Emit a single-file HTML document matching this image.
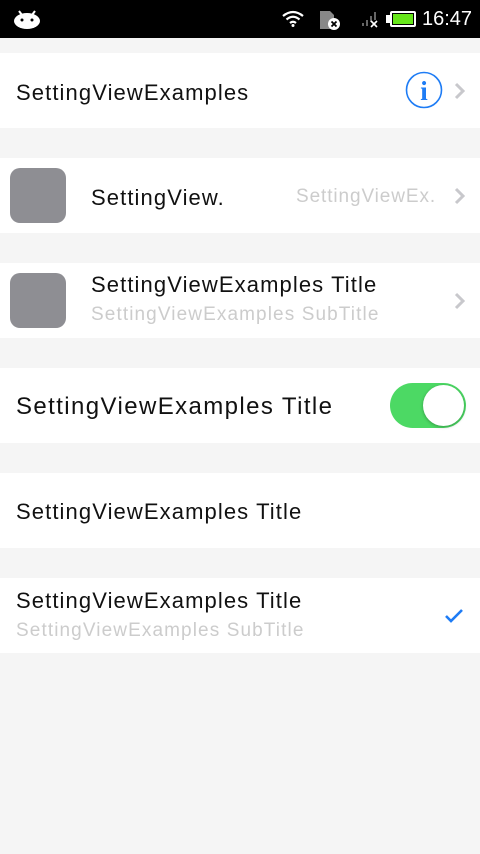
<!DOCTYPE html>
<html><head><meta charset="utf-8"><style>
*{margin:0;padding:0;box-sizing:border-box}
body{width:480px;height:854px;background:#f5f5f5;font-family:"Liberation Sans","DejaVu Sans",sans-serif;position:relative;overflow:hidden}
.sb{position:absolute;left:0;top:0;width:480px;height:38px;background:#000;color:#fff}
.row{position:absolute;left:0;width:480px;height:75px;background:#fff}
.t{position:absolute;font-size:22px;color:#111;white-space:nowrap;letter-spacing:1.1px}
.s{position:absolute;font-size:19px;color:#ccc;white-space:nowrap;letter-spacing:1.1px}
.img{position:absolute;left:10px;top:10px;width:56px;height:55px;border-radius:10px;background:#8e8e93}
.chev{position:absolute;right:14px;top:29px}
</style></head><body>
<div class="sb">
<svg style="position:absolute;left:13px;top:9px" width="28" height="20"><ellipse cx="14" cy="12" rx="13" ry="8" fill="#fff"/><line x1="6" y1="2" x2="9" y2="6" stroke="#fff" stroke-width="2"/><line x1="22" y1="2" x2="19" y2="6" stroke="#fff" stroke-width="2"/><circle cx="9" cy="11" r="1.5" fill="#000"/><circle cx="19" cy="11" r="1.5" fill="#000"/></svg>
<svg style="position:absolute;left:282px;top:10px" width="22" height="17"><path d="M1 6 Q11 -2 21 6" stroke="#fff" stroke-width="2.2" fill="none"/><path d="M4.5 9.5 Q11 4 17.5 9.5" stroke="#fff" stroke-width="2.2" fill="none"/><path d="M8 13 Q11 10.5 14 13" stroke="#fff" stroke-width="2.2" fill="none"/><circle cx="11" cy="15.5" r="1.5" fill="#fff"/></svg>
<svg style="position:absolute;left:318px;top:9px" width="24" height="22"><path d="M2 2h10l4 4v14H2z" fill="#888"/><circle cx="16" cy="15" r="6" fill="#fff"/><path d="M13.5 12.5l5 5M18.5 12.5l-5 5" stroke="#000" stroke-width="1.8"/></svg>
<svg style="position:absolute;left:360px;top:10px" width="20" height="18"><rect x="2" y="13" width="2" height="3" fill="#666"/><rect x="6" y="10" width="2" height="6" fill="#666"/><rect x="10" y="6" width="2" height="6" fill="#666"/><rect x="14" y="2" width="2" height="8" fill="#666"/><path d="M11 11l6 6M17 11l-6 6" stroke="#fff" stroke-width="1.6"/></svg>
<div style="position:absolute;left:390px;top:11px;width:26px;height:16px;border:2px solid #fff;border-radius:2px;padding:1px"><div style="width:100%;height:100%;background:#66e61a"></div></div>
<div style="position:absolute;left:386px;top:15px;width:4px;height:8px;background:#fff"></div>
<div style="position:absolute;left:422px;top:8px;font-size:20px;color:#fff">16:47</div>
</div>

<div class="row" style="top:53px">
<div class="t" style="left:16px;top:27px">SettingViewExamples</div>
<svg style="position:absolute;left:405px;top:18px" width="38" height="38"><circle cx="19" cy="19" r="17.5" fill="none" stroke="#1e7cf5" stroke-width="1.6"/><text x="19" y="29" text-anchor="middle" font-family="Liberation Serif,serif" font-weight="bold" font-size="27" fill="#1e7cf5">i</text></svg>
<svg class="chev" width="12" height="18"><path d="M2 2l7 7-7 7" stroke="#c8c8cc" stroke-width="3" fill="none"/></svg>
</div>

<div class="row" style="top:158px">
<div class="img"></div>
<div class="t" style="left:91px;top:27px">SettingView.</div>
<div class="s" style="left:296px;top:28px;letter-spacing:0.9px">SettingViewEx.</div>
<svg class="chev" width="12" height="18"><path d="M2 2l7 7-7 7" stroke="#c8c8cc" stroke-width="3" fill="none"/></svg>
</div>

<div class="row" style="top:263px">
<div class="img"></div>
<div class="t" style="left:91px;top:9px">SettingViewExamples Title</div>
<div class="s" style="left:91px;top:41px">SettingViewExamples SubTitle</div>
<svg class="chev" width="12" height="18"><path d="M2 2l7 7-7 7" stroke="#c8c8cc" stroke-width="3" fill="none"/></svg>
</div>

<div class="row" style="top:368px">
<div class="t" style="left:16px;top:25px;font-size:24px;letter-spacing:1.4px">SettingViewExamples Title</div>
<div style="position:absolute;left:390px;top:15px;width:76px;height:45px;border-radius:23px;background:#4cd964"></div>
<div style="position:absolute;left:423px;top:17px;width:41px;height:41px;border-radius:50%;background:#fff;box-shadow:0 1px 3px rgba(0,0,0,.3)"></div>
</div>

<div class="row" style="top:473px">
<div class="t" style="left:16px;top:26px">SettingViewExamples Title</div>
</div>

<div class="row" style="top:578px">
<div class="t" style="left:16px;top:10px">SettingViewExamples Title</div>
<div class="s" style="left:16px;top:42px">SettingViewExamples SubTitle</div>
<svg style="position:absolute;left:444px;top:30px" width="22" height="16"><path d="M2 8l5 5 11-11" stroke="#1e7cf5" stroke-width="2.6" fill="none"/></svg>
</div>
</body></html>
